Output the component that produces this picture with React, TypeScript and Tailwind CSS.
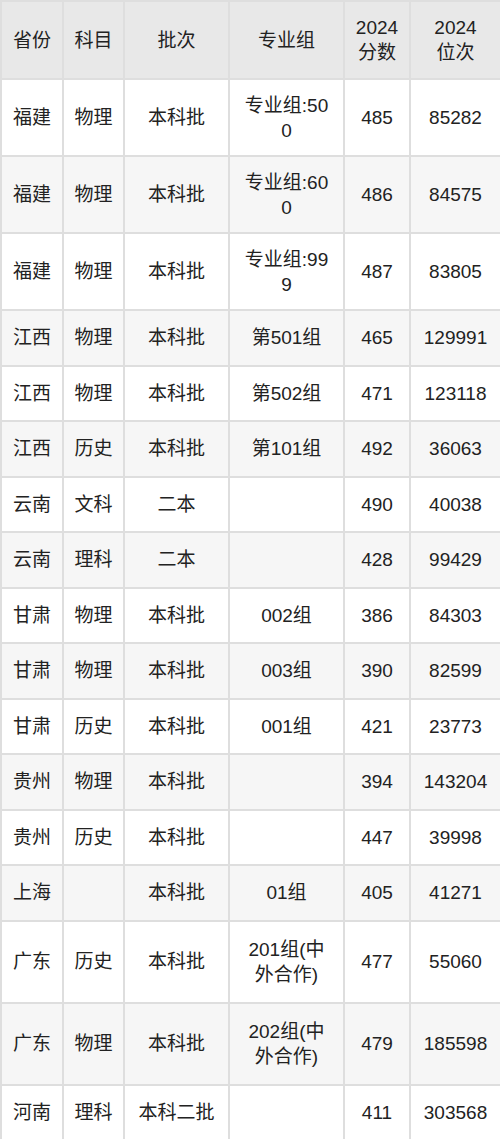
import { ReactNode } from 'react';

type Row = {
  province: string;
  subject: string;
  batch: string;
  group: ReactNode;
  score: string;
  rank: string;
  h: string;
};

const rows: Row[] = [
  { province: '福建', subject: '物理', batch: '本科批', group: <>专业组:50<br />0</>, score: '485', rank: '85282', h: 'h-[77px]' },
  { province: '福建', subject: '物理', batch: '本科批', group: <>专业组:60<br />0</>, score: '486', rank: '84575', h: 'h-[77px]' },
  { province: '福建', subject: '物理', batch: '本科批', group: <>专业组:99<br />9</>, score: '487', rank: '83805', h: 'h-[77px]' },
  { province: '江西', subject: '物理', batch: '本科批', group: '第501组', score: '465', rank: '129991', h: 'h-[55.5px]' },
  { province: '江西', subject: '物理', batch: '本科批', group: '第502组', score: '471', rank: '123118', h: 'h-[55.5px]' },
  { province: '江西', subject: '历史', batch: '本科批', group: '第101组', score: '492', rank: '36063', h: 'h-[55.5px]' },
  { province: '云南', subject: '文科', batch: '二本', group: '', score: '490', rank: '40038', h: 'h-[55.5px]' },
  { province: '云南', subject: '理科', batch: '二本', group: '', score: '428', rank: '99429', h: 'h-[55.5px]' },
  { province: '甘肃', subject: '物理', batch: '本科批', group: '002组', score: '386', rank: '84303', h: 'h-[55.5px]' },
  { province: '甘肃', subject: '物理', batch: '本科批', group: '003组', score: '390', rank: '82599', h: 'h-[55.5px]' },
  { province: '甘肃', subject: '历史', batch: '本科批', group: '001组', score: '421', rank: '23773', h: 'h-[55.5px]' },
  { province: '贵州', subject: '物理', batch: '本科批', group: '', score: '394', rank: '143204', h: 'h-[55.5px]' },
  { province: '贵州', subject: '历史', batch: '本科批', group: '', score: '447', rank: '39998', h: 'h-[55.5px]' },
  { province: '上海', subject: '', batch: '本科批', group: '01组', score: '405', rank: '41271', h: 'h-[55.5px]' },
  { province: '广东', subject: '历史', batch: '本科批', group: <>201组(中<br />外合作)</>, score: '477', rank: '55060', h: 'h-[82px]' },
  { province: '广东', subject: '物理', batch: '本科批', group: <>202组(中<br />外合作)</>, score: '479', rank: '185598', h: 'h-[82px]' },
  { province: '河南', subject: '理科', batch: '本科二批', group: '', score: '411', rank: '303568', h: 'h-[55.5px]' },
];

// font set on each cell, tables don't inherit font-size here
const cell =
  "border-2 border-[#dedede] text-center align-middle px-1 text-[19px] leading-[25px] text-[#222] font-normal font-['Liberation_Sans','Noto_Sans_CJK_SC',sans-serif]";

export default function App() {
  return (
    <div className="w-[500px] bg-white">
      <table className="w-[500px] table-fixed border-collapse">
        <colgroup>
          <col className="w-[62px]" />
          <col className="w-[61px]" />
          <col className="w-[105px]" />
          <col className="w-[115px]" />
          <col className="w-[66px]" />
          <col className="w-[91px]" />
        </colgroup>
        <thead>
          <tr className="h-[78px] bg-[#e8e8e8]">
            <th className={cell}>省份</th>
            <th className={cell}>科目</th>
            <th className={cell}>批次</th>
            <th className={cell}>专业组</th>
            <th className={cell}>2024<br />分数</th>
            <th className={cell}>2024<br />位次</th>
          </tr>
        </thead>
        <tbody>
          {rows.map((r, i) => (
            <tr key={i} className={`${r.h} ${i % 2 === 1 ? 'bg-[#f6f6f6]' : 'bg-white'}`}>
              <td className={cell}>{r.province}</td>
              <td className={cell}>{r.subject}</td>
              <td className={cell}>{r.batch}</td>
              <td className={cell}>{r.group}</td>
              <td className={cell}>{r.score}</td>
              <td className={cell}>{r.rank}</td>
            </tr>
          ))}
        </tbody>
      </table>
    </div>
  );
}
